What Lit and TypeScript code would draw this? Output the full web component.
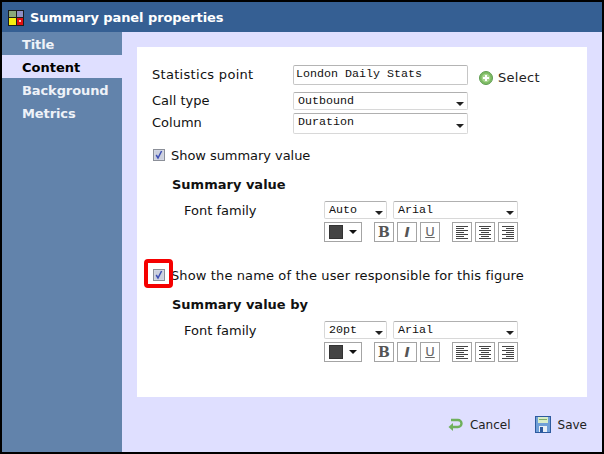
import { LitElement, html, css, svg } from "lit";
import { customElement } from "lit/decorators.js";

const alignLines = (kind: "l" | "c" | "r") => {
  const lens = [12, 8, 12, 8, 12, 8, 12];
  return svg`${lens.map((len, i) => {
    const sx = kind === "l" ? 2 : kind === "c" ? 2 + (12 - len) / 2 : 2 + 12 - len;
    return svg`<rect x=${sx} y=${2 + i * 2} width=${len} height="1" fill="#444"></rect>`;
  })}`;
};

@customElement("app-root")
export class AppRoot extends LitElement {
  static styles = css`
    :host { display: block; width: 604px; height: 454px; background: #000; font-family: "DejaVu Sans", Verdana, sans-serif; font-size: 13px; color: #111; }
    * { box-sizing: border-box; }
    .window { width: 600px; height: 450px; margin: 0; transform: translate(2px, 2px); display: flex; flex-direction: column; background: #dfdfff; overflow: hidden; }
    .title { height: 30px; background: #355f93; color: #fff; font-weight: bold; font-size: 13px; letter-spacing: -0.08px; display: flex; align-items: center; gap: 6px; padding-left: 6px; flex: none; }
    .title svg { display: block; margin-top: 2px; }
    .title span { padding-top: 1px; }
    .body { flex: 1; display: flex; min-height: 0; }
    .side { width: 120px; background: #6283ab; flex: none; display: flex; flex-direction: column; }
    .tab { height: 23px; line-height: 25px; padding-left: 20px; font-weight: bold; color: #eef2f8; font-size: 13px; letter-spacing: -0.1px; }
    .tab.first { background: #6586ae; }
    .tab.on { background: #dfdfff; color: #000; letter-spacing: 0; }
    .main { flex: 1; display: flex; flex-direction: column; padding: 15px 15px 0 15px; }
    .panel { width: 450px; height: 350px; background: #fff; padding: 18px 15px 0; flex: none; position: relative; }
    .form { display: grid; grid-template-columns: 141px 175px auto; align-items: center; }
    .l { line-height: 18px; white-space: nowrap; }
    .mono { font-family: "Liberation Mono", "Courier New", monospace; font-size: 11.67px; color: #111; }
    .input { height: 20px; border: 1px solid #c6c6c6; border-top-color: #b4b4b4; border-radius: 2px; padding: 0 0 2px 2px; display: flex; align-items: center; background: #fff; }
    .sel { height: 18px; border: 1px solid #d8d8d8; border-top-color: #b0b0b0; border-radius: 2px; padding: 0 0 1px 4px; display: flex; align-items: center; justify-content: space-between; background: #fff; position: relative; white-space: pre; }
    .sel::after { content: ""; position: absolute; right: 3px; top: 9px; border: 4px solid transparent; border-top-color: #222; border-bottom-width: 0; }
    .sel.tall { height: 21px; padding-bottom: 4px; }
    .sel.tall::after { top: 10px; }
    .stat { letter-spacing: 0.3px; padding-top: 0; }
    .pick { display: flex; align-items: center; gap: 5px; padding-left: 11px; margin-top: 5px; color: #222; }
    .pick span { letter-spacing: 0.3px; }
    .pick svg { display: block; }
    .check-row { display: flex; align-items: center; gap: 6px; height: 14px; }
    .cb { width: 12px; height: 12px; margin-left: 1px; display: block; flex: none; }
    .cr1 { margin-top: 14px; }
    .ls1 { letter-spacing: -0.05px; }
    .ls2 { letter-spacing: 0.12px; }
    .h { font-weight: bold; color: #111; line-height: 16px; margin: 15px 0 0 20px; }
    .fam-wrap { margin-top: 8px; }
    .fam { display: grid; grid-template-columns: 140px auto; margin-left: 32px; }
    .fam-l { line-height: 18px; padding-top: 1px; }
    .ctrls { display: flex; flex-direction: column; gap: 3px; }
    .ctrl-r { display: flex; gap: 6px; }
    .s-size { width: 63px; }
    .s-font { width: 125px; }
    .tools { display: flex; }
    .btn { width: 20px; height: 20px; border: 1px solid #a4a4a4; display: flex; align-items: center; justify-content: center; background: #fff; margin-right: 3px; }
    .btn svg { display: block; }
    .btn.last { margin-right: 0; }
    .btn-t { font-size: 14px; line-height: 16px; color: #555; }
    .b { font-family: "DejaVu Serif", serif; font-weight: bold; }
    .i { font-family: "DejaVu Sans", sans-serif; font-style: italic; font-weight: bold; }
    .u { font-family: "DejaVu Sans", sans-serif; text-decoration: underline; font-size: 13px; color: #666; }
    .color { width: 38px; height: 20px; border: 1px solid #a4a4a4; display: flex; align-items: center; gap: 6px; padding-left: 4px; margin-right: 12px; }
    .sw { width: 14px; height: 14px; background: #444; border: 1px solid #333; flex: none; }
    .car { width: 0; height: 0; border: 4px solid transparent; border-top: 4px solid #111; border-bottom: 0; }
    .sp { margin-left: 9px; }
    .redbox { position: absolute; left: 7px; top: 212px; width: 29px; height: 29px; border: 4px solid #f50000; border-radius: 4px; }
    .second { margin-top: 26px; }
    .foot { display: flex; justify-content: flex-end; align-items: center; height: 55px; flex: none; color: #222; font-size: 12px; }
    .act { display: flex; align-items: center; }
    .act svg { display: block; }
    .act.c { gap: 7px; margin-right: 24px; }
    .act.s { gap: 7px; }
  `;

  group(size: string) {
    return html`
      <div class="fam-wrap">
        <div class="fam">
          <div class="l fam-l">Font family</div>
          <div class="ctrls">
            <div class="ctrl-r">
              <div class="sel mono s-size">${size}</div>
              <div class="sel mono s-font">Arial</div>
            </div>
            <div class="tools">
              <div class="color"><span class="sw"></span><span class="car"></span></div>
              <div class="btn"><span class="btn-t b">B</span></div>
              <div class="btn"><span class="btn-t i">I</span></div>
              <div class="btn"><span class="btn-t u">U</span></div>
              <div class="btn sp"><svg width="16" height="16" viewBox="0 0 16 16">${alignLines("l")}</svg></div>
              <div class="btn"><svg width="16" height="16" viewBox="0 0 16 16">${alignLines("c")}</svg></div>
              <div class="btn last"><svg width="16" height="16" viewBox="0 0 16 16">${alignLines("r")}</svg></div>
            </div>
          </div>
        </div>
      </div>
    `;
  }

  checkbox() {
    return html`<svg class="cb" viewBox="0 0 12 12">
      <rect x="0.5" y="0.5" width="11" height="11" fill="#d8dce8" stroke="#8b8f98"></rect>
      <rect x="1.5" y="1.5" width="9" height="9" fill="#ccd0de"></rect>
      <path d="M3.2 6l1.8 3 3.6-7" fill="none" stroke="#3e4fb5" stroke-width="1.5"></path>
    </svg>`;
  }

  render() {
    return html`
      <div class="window">
        <div class="title">
          <svg width="16" height="16" viewBox="0 0 16 16">
            <rect width="16" height="16" fill="#1c1c1c"></rect>
            <rect x="1" y="1" width="7" height="6" fill="#8aa87a"></rect>
            <rect x="9" y="1" width="6" height="6" fill="#8f8fc4"></rect>
            <rect x="1" y="8" width="7" height="7" fill="#f6ee10"></rect>
            <rect x="9" y="8" width="6" height="7" fill="#e01010"></rect>
            <rect x="11" y="10" width="2" height="2" fill="#f8c0c0"></rect>
          </svg>
          <span>Summary panel properties</span>
        </div>
        <div class="body">
          <div class="side">
            <div class="tab first">Title</div>
            <div class="tab on">Content</div>
            <div class="tab">Background</div>
            <div class="tab">Metrics</div>
          </div>
          <div class="main">
            <div class="panel">
              <div class="form">
                <div class="l stat">Statistics point</div>
                <div class="input mono">London Daily Stats</div>
                <div class="pick">
                  <svg width="14" height="14" viewBox="0 0 14 14">
                    <circle cx="7" cy="7" r="6.5" fill="#7dbb63" stroke="#5f9c52"></circle>
                    <circle cx="7" cy="7" r="4.3" fill="#a6d48e"></circle>
                    <path d="M7 4v6M4 7h6" stroke="#fff" stroke-width="2"></path>
                  </svg>
                  <span>Select</span>
                </div>
                <div class="l" style="margin-top:7px">Call type</div>
                <div class="sel mono" style="margin-top:7px">Outbound</div>
                <div></div>
                <div class="l" style="margin-top:1px">Column</div>
                <div class="sel tall mono" style="margin-top:3px">Duration</div>
                <div></div>
              </div>
              <div class="check-row cr1">${this.checkbox()}<span class="ls1">Show summary value</span></div>
              <div class="h">Summary value</div>
              ${this.group("Auto")}
              <div class="check-row second">${this.checkbox()}<span class="ls2">Show the name of the user responsible for this figure</span></div>
              <div class="h">Summary value by</div>
              ${this.group("20pt")}
              <div class="redbox"></div>
            </div>
            <div class="foot">
              <div class="act c">
                <svg width="16" height="16" viewBox="0 0 16 16">
                  <path d="M4 3h7a3.5 3.5 0 0 1 0 7H5" fill="none" stroke="#6fb05c" stroke-width="2.4"></path>
                  <path d="M6 6L1.5 10 6 14z" fill="#6fb05c"></path>
                </svg>
                <span>Cancel</span>
              </div>
              <div class="act s">
                <svg width="16" height="17" viewBox="0 0 16 17">
                  <rect x="0.5" y="0.5" width="15" height="16" fill="#6f9fd8" stroke="#2d5a9e"></rect>
                  <rect x="3" y="1" width="10" height="6" fill="#d8ecc8"></rect>
                  <rect x="4" y="3" width="8" height="1" fill="#7fae6a"></rect>
                  <rect x="4" y="10" width="8" height="6" fill="#e8eef6"></rect>
                  <rect x="5" y="11" width="3" height="5" fill="#2d5a9e"></rect>
                </svg>
                <span>Save</span>
              </div>
            </div>
          </div>
        </div>
      </div>
    `;
  }
}
